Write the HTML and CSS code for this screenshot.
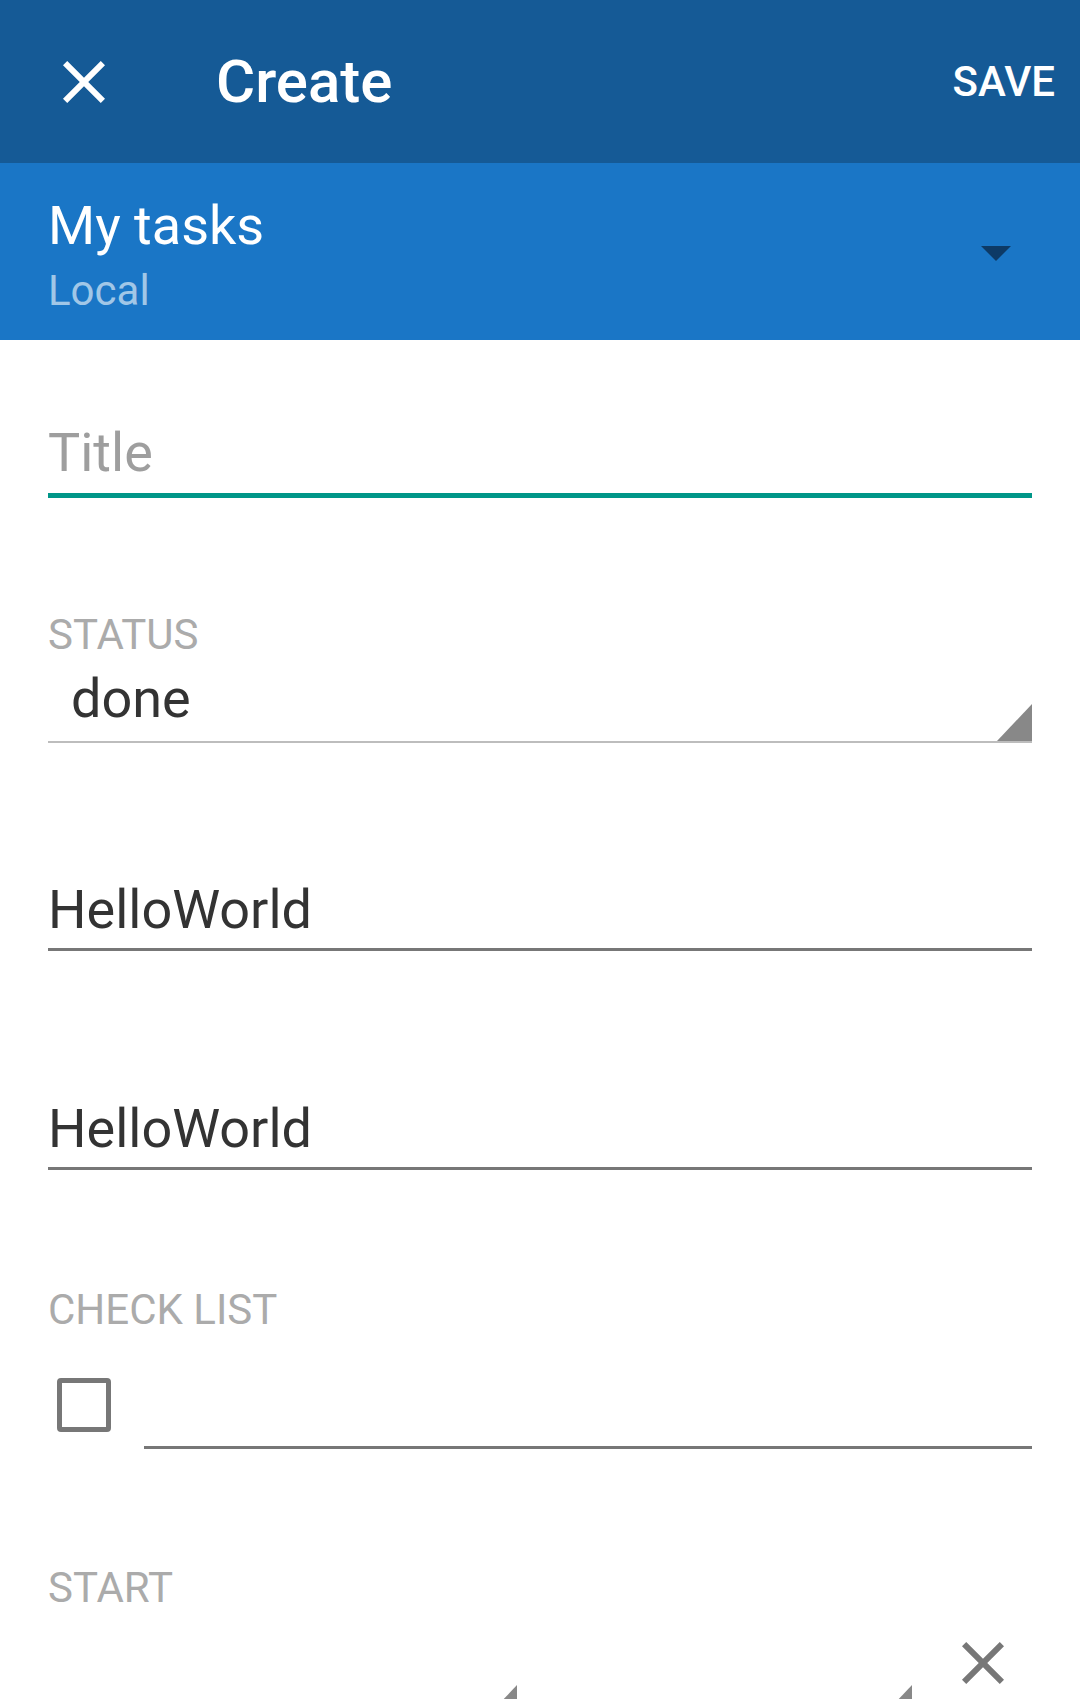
FILE: index.html
```html
<!DOCTYPE html>
<html>
<head>
<meta charset="utf-8">
<link rel="stylesheet" href="styles.css">
</head>
<body>
<div class="screen">
  <header class="toolbar">
    <button class="close-btn" aria-label="close">
      <svg viewBox="0 0 24 24" width="72" height="72"><path d="M19 6.41L17.59 5 12 10.59 6.41 5 5 6.41 10.59 12 5 17.59 6.41 19 12 13.41 17.59 19 19 17.59 13.41 12z" fill="#fff"/></svg>
    </button>
    <div class="toolbar-title">Create</div>
    <div class="save">SAVE</div>
  </header>
  <section class="list-picker">
    <div class="list-text">
      <div class="list-name">My tasks</div>
      <div class="list-account">Local</div>
    </div>
    <div class="dropdown-arrow"></div>
  </section>
  <main class="form">
    <div class="field title-field">
      <div class="hint">Title</div>
    </div>

    <div class="label status-label">STATUS</div>
    <div class="spinner status-spinner">
      <div class="spinner-value">done</div>
      <div class="corner"></div>
    </div>

    <div class="field text-field first-text">
      <div class="value">HelloWorld</div>
    </div>
    <div class="field text-field second-text">
      <div class="value">HelloWorld</div>
    </div>

    <div class="label check-label">CHECK LIST</div>
    <div class="check-row">
      <div class="checkbox"></div>
      <div class="check-input"></div>
    </div>

    <div class="label start-label">START</div>
    <div class="start-row">
      <div class="spinner date-spinner"><div class="corner"></div></div>
      <div class="spinner time-spinner"><div class="corner"></div></div>
      <button class="clear-btn" aria-label="clear">
        <svg viewBox="0 0 24 24" width="72" height="72"><path d="M19 6.41L17.59 5 12 10.59 6.41 5 5 6.41 10.59 12 5 17.59 6.41 19 12 13.41 17.59 19 19 17.59 13.41 12z" fill="#777"/></svg>
      </button>
    </div>
  </main>
</div>
</body>
</html>
```

FILE: styles.css
```css
* { box-sizing: border-box; }
html, body { margin: 0; padding: 0; background: #fff; }
body { font-family: Roboto, "Noto Sans", sans-serif; }
.screen { width: 1080px; height: 1699px; overflow: hidden; background: #fff; }

.toolbar {
  height: 163px;
  background: #155A96;
  display: flex;
  align-items: center;
  color: #fff;
}
.close-btn {
  border: 0; padding: 0; background: none;
  width: 72px; height: 72px;
  margin-left: 48px;
  display: block;
}
.close-btn svg, .clear-btn svg { display: block; }
.toolbar-title {
  margin-left: 96px;
  font-size: 60px;
  font-weight: 500;
  line-height: 70px;
  flex: 1;
}
.save {
  font-size: 42px;
  font-weight: 500;
  line-height: 50px;
  margin-right: 25px;
}

.list-picker {
  height: 177px;
  background: #1A76C6;
  display: flex;
  align-items: center;
  padding: 0 69px 0 48px;
}
.list-text { flex: 1; padding-top: 6px; }
.list-name {
  color: #fff;
  font-size: 54px;
  line-height: 64px;
}
.list-account {
  color: rgba(255,255,255,0.6);
  font-size: 42px;
  line-height: 50px;
  margin-top: 8px;
}
.dropdown-arrow {
  width: 0; height: 0;
  border-left: 15px solid transparent;
  border-right: 15px solid transparent;
  border-top: 15px solid #0D3A66;
  margin-top: 4px;
}

.form { padding: 0 48px; }

.field { padding-bottom: 6px; }
.title-field {
  margin-top: 81px;
  padding-bottom: 8px;
  border-bottom: 5px solid #009688;
}
.hint {
  color: #9E9E9E;
  font-size: 54px;
  line-height: 64px;
}
.label {
  color: #ABABAB;
  font-size: 42px;
  line-height: 50px;
}
.status-label { margin-top: 112px; }
.spinner {
  display: flex;
  align-items: flex-end;
  border-bottom: 2px solid #BDBDBD;
}
.status-spinner { margin-top: 7px; padding-bottom: 10px; }
.spinner-value {
  flex: 1;
  padding-left: 23px;
  color: #333;
  font-size: 54px;
  line-height: 64px;
}
.corner {
  width: 0; height: 0;
  border-left: 35px solid transparent;
  border-bottom: 37px solid #888;
  margin-left: auto;
  margin-bottom: -10px;
}
.text-field { border-bottom: 3px solid #777; padding-bottom: 6px; }
.first-text { margin-top: 135px; }
.second-text { margin-top: 146px; }
.value {
  color: #333;
  font-size: 54px;
  line-height: 64px;
}
.check-label { margin-top: 115px; }
.check-row {
  display: flex;
  align-items: flex-start;
  margin-top: 43px;
}
.checkbox {
  width: 54px; height: 54px;
  margin-left: 9px;
  border: 5px solid #777;
  border-radius: 4px;
}
.check-input {
  flex: 1;
  height: 71px;
  margin-left: 33px;
  border-bottom: 3px solid #777;
}
.start-label { margin-top: 114px; }
.start-row {
  display: flex;
  align-items: flex-start;
  margin-top: 14px;
}
.date-spinner, .time-spinner {
  height: 97px;
  justify-content: flex-end;
}
.date-spinner .corner, .time-spinner .corner { margin-bottom: 0; }
.date-spinner { width: 469px; }
.time-spinner { flex: 1; margin-left: 43px; }
.clear-btn {
  border: 0; padding: 0; background: none;
  width: 72px; height: 72px;
  margin-left: 35px;
  margin-right: 13px;
}
```
